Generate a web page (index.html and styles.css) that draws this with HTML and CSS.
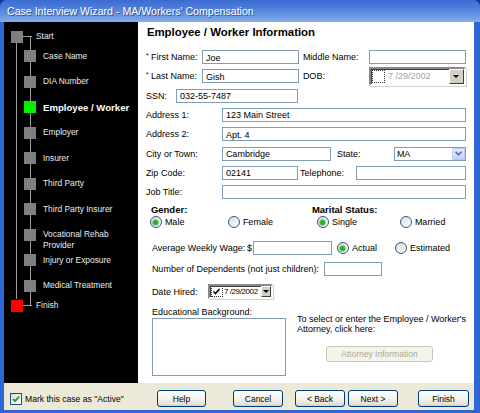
FILE: index.html
```html
<!DOCTYPE html>
<html lang="en">
<head>
  <meta charset="UTF-8" />
  <title>Case Interview Wizard</title>
  <link rel="stylesheet" href="styles.css">
</head>
<body>

<div class="window">
  <div class="titlebar">Case Interview Wizard - MA/Workers' Compensation</div>

  <div class="frame">
    <div class="body-row">

      <!-- Steps tree -->
      <div class="steps">
        <div class="node root first"><span class="sq"></span><span class="txt">Start</span></div>
        <div class="node sub"><span class="sq"></span><span class="txt">Case Name</span></div>
        <div class="node sub"><span class="sq"></span><span class="txt">DIA Number</span></div>
        <div class="node sub current"><span class="sq"></span><span class="txt">Employee / Worker</span></div>
        <div class="node sub"><span class="sq"></span><span class="txt">Employer</span></div>
        <div class="node sub"><span class="sq"></span><span class="txt">Insurer</span></div>
        <div class="node sub"><span class="sq"></span><span class="txt">Third Party</span></div>
        <div class="node sub"><span class="sq"></span><span class="txt">Third Party Insurer</span></div>
        <div class="node sub"><span class="sq"></span><span class="txt">Vocational Rehab<br>Provider</span></div>
        <div class="node sub"><span class="sq"></span><span class="txt">Injury or Exposure</span></div>
        <div class="node sub last"><span class="sq"></span><span class="txt">Medical Treatment</span></div>
        <div class="node root finish"><span class="sq"></span><span class="txt">Finish</span></div>
      </div>

      <!-- Page -->
      <div class="page">
        <h1>Employee / Worker Information</h1>

        <div class="row">
          <span class="lbl w56"><small class="req">*</small> First Name:</span>
          <input class="w97" type="text" value="Joe">
          <span class="lbl ml4 w66">Middle Name:</span>
          <input class="w97" type="text" value="">
        </div>
        <div class="row">
          <span class="lbl w56"><small class="req">*</small> Last Name:</span>
          <input class="w97" type="text" value="Gish">
          <span class="lbl ml4 w66">DOB:</span>
          <div class="picker dob">
            <span class="pchk"></span>
            <span class="pval">7 /29/2002</span>
            <span class="pbtn"></span>
          </div>
        </div>
        <div class="row">
          <span class="lbl w30">SSN:</span>
          <input class="w122" type="text" value="032-55-7487">
        </div>
        <div class="row">
          <span class="lbl w76">Address 1:</span>
          <input class="w244" type="text" value="123 Main Street">
        </div>
        <div class="row">
          <span class="lbl w76">Address 2:</span>
          <input class="w244" type="text" value="Apt. 4">
        </div>
        <div class="row">
          <span class="lbl w76">City or Town:</span>
          <input class="w109" type="text" value="Cambridge">
          <span class="lbl ml6 w57">State:</span>
          <div class="combo">
            <span class="cval">MA</span>
            <span class="cbtn">
              <svg width="7" height="5" viewBox="0 0 7 5"><path d="M0.5 0.8 L3.5 3.8 L6.5 0.8" fill="none" stroke="#4d6185" stroke-width="1.4"/></svg>
            </span>
          </div>
        </div>
        <div class="row">
          <span class="lbl w76">Zip Code:</span>
          <input class="w76" type="text" value="02141">
          <span class="lbl ml2 w56">Telephone:</span>
          <input class="w110" type="text" value="">
        </div>
        <div class="row">
          <span class="lbl w76">Job Title:</span>
          <input class="w244" type="text" value="">
        </div>

        <div class="sect-head">
          <span class="gender">Gender:</span>
          <span>Marital Status:</span>
        </div>
        <div class="radios">
          <span class="opt o-male"><span class="radio on"></span>Male</span>
          <span class="opt o-female"><span class="radio"></span>Female</span>
          <span class="opt o-single"><span class="radio on"></span>Single</span>
          <span class="opt"><span class="radio"></span>Married</span>
        </div>

        <div class="line wage">
          <span class="lbl w95">Average Weekly Wage:</span>
          <span class="lbl w6">$</span>
          <input class="w79" type="text" value="">
          <span class="opt o-actual"><span class="radio on"></span>Actual</span>
          <span class="opt"><span class="radio"></span>Estimated</span>
        </div>
        <div class="line deps">
          <span class="lbl w172">Number of Dependents (not just children):</span>
          <input class="w58" type="text" value="">
        </div>
        <div class="line hired">
          <span class="lbl w56">Date Hired:</span>
          <div class="picker small">
            <span class="pchk checked">
              <svg width="9" height="9" viewBox="0 0 9 9"><path d="M1.5 4.5 L3.5 6.5 L7.5 2" fill="none" stroke="#000" stroke-width="1.6"/></svg>
            </span>
            <span class="pval">7 /29/2002</span>
            <span class="pbtn"></span>
          </div>
        </div>

        <div class="bottom">
          <div class="edu">
            <div class="lbl">Educational Background:</div>
            <textarea></textarea>
          </div>
          <div class="attorney">
            <p>To select or enter the Employee / Worker's<br>Attorney, click here:</p>
            <button class="btn-disabled" disabled>Attorney Information</button>
          </div>
        </div>
      </div>
    </div>

    <!-- Footer -->
    <div class="footer">
      <label class="active-chk">
        <span class="chk">
          <svg width="10" height="10" viewBox="0 0 10 10"><path d="M2 5 L4 7.2 L8.2 2.6" fill="none" stroke="#21a121" stroke-width="1.8"/></svg>
        </span>
        Mark this case as "Active"
      </label>
      <button class="btn b-help">Help</button>
      <button class="btn b-cancel">Cancel</button>
      <button class="btn b-back">&lt; Back</button>
      <button class="btn b-next">Next &gt;</button>
      <button class="btn b-finish">Finish</button>
    </div>
  </div>
</div>

</body>
</html>
```

FILE: styles.css
```css
* {
  box-sizing: border-box;
  margin: 0;
  padding: 0;
}

body {
  font-family: 'Liberation Sans', Arial, sans-serif;
  background: #163a8e;
  width: 480px;
  height: 413px;
  overflow: hidden;
}

/* Window chrome */
.window {
  width: 480px;
  height: 413px;
  background: #2f66d6;
  border-radius: 7px 7px 0 0;
  display: flex;
  flex-direction: column;
  overflow: hidden;
}

.titlebar {
  height: 22px;
  line-height: 23px;
  padding-left: 7px;
  color: #fff;
  font-size: 10.6px;
  text-shadow: 1px 1px 0 #2c52a8;
  background: linear-gradient(to bottom, #3c6cd2 0%, #4a7ad8 30%, #6391e0 65%, #86aeea 100%);
}

.frame {
  flex: 1;
  display: flex;
  flex-direction: column;
  padding: 0 6px 3px 4px;
}

.body-row {
  display: flex;
  height: 361px;
}

/* Steps tree */
.steps {
  width: 134px;
  background: #000;
  color: #ececec;
  font-size: 8.4px;
  padding-top: 8.5px;
  position: relative;
}

.steps::before {
  content: "";
  position: absolute;
  left: 12px;
  top: 20px;
  width: 1px;
  height: 257px;
  background: #9c9c9c;
}

.steps::after {
  content: "";
  position: absolute;
  left: 26px;
  top: 14px;
  width: 1px;
  height: 270px;
  background: #9c9c9c;
}

.node {
  display: flex;
  align-items: flex-start;
  height: 25.5px;
}

.node .sq {
  width: 12px;
  height: 12px;
  flex: none;
  background: #7f7f7f;
  position: relative;
  z-index: 1;
}

.node .txt {
  line-height: 11px;
  margin-top: 0.5px;
}

.node.root {
  margin-left: 7px;
}

.node.root .sq {
  margin-right: 13px;
}

.node.root .sq::after {
  content: "";
  position: absolute;
  left: 12px;
  top: 5px;
  width: 9px;
  height: 1px;
  background: #9c9c9c;
}

.node.first {
  height: 19.5px;
}

.node.finish .sq {
  background: #f00;
}

.node.sub {
  margin-left: 20px;
}

.node.sub .sq {
  margin-right: 7px;
}

.node.sub.last {
  height: 20px;
}

.node.current .sq {
  background: #00f000;
}

.node.current .txt {
  font-weight: bold;
  font-size: 9.6px;
  color: #fff;
}

/* Page */
.page {
  flex: 1;
  background: #fff;
  padding: 4px 8px 0 8px;
  font-size: 9px;
  color: #000;
}

.page h1 {
  font-size: 11.4px;
  line-height: 12px;
  margin: 0 0 9.4px 1px;
}

.row {
  display: flex;
  align-items: center;
  height: 19.3px;
}

.lbl {
  flex: none;
  white-space: nowrap;
}

.req {
  font-size: 6.5px;
  vertical-align: 2px;
}

.w6 { width: 6px; }
.w30 { width: 30px; }
.w56 { width: 56px; }
.w57 { width: 57px; }
.w58 { width: 58px; }
.w66 { width: 66px; }
.w76 { width: 76px; }
.w79 { width: 79px; }
.w95 { width: 95px; }
.w97 { width: 97px; }
.w109 { width: 109px; }
.w110 { width: 110px; }
.w122 { width: 122px; }
.w172 { width: 172px; }
.w244 { width: 244px; }
.ml2 { margin-left: 2px; }
.ml4 { margin-left: 4px; }
.ml6 { margin-left: 6px; }

.page input {
  flex: none;
  height: 14px;
  border: 1px solid #7f9db9;
  background: #fff;
  font-family: 'Liberation Sans', Arial, sans-serif;
  font-size: 9px;
  padding: 1px 3px 0;
  color: #000;
  outline: none;
}

/* Date picker */
.picker {
  flex: none;
  display: flex;
  align-items: center;
  background: #fff;
  border: 2px solid;
  border-color: #8a8a8a #fff #fff #8a8a8a;
  box-shadow: inset 1px 1px 0 #404040, 1px 1px 0 #d4d0c8;
}

.picker.dob {
  width: 97px;
  height: 19px;
}

.picker.small {
  width: 65px;
  height: 15px;
}

.pchk {
  flex: none;
  width: 13px;
  height: 13px;
  margin-left: 1px;
  border: 1px dotted #333;
  display: flex;
  align-items: center;
  justify-content: center;
}

.picker.small .pchk {
  width: 12px;
  height: 11px;
  margin-left: 1px;
}

.pval {
  flex: 1;
  margin-left: 3px;
  color: #a3a3a3;
  white-space: nowrap;
}

.picker.small .pval {
  color: #000;
  margin-left: 1px;
  font-size: 8px;
  letter-spacing: -0.4px;
}

.pbtn {
  flex: none;
  width: 15px;
  height: 100%;
  background: #d4d0c8;
  border: 1px solid;
  border-color: #fff #404040 #404040 #fff;
  display: flex;
  align-items: center;
  justify-content: center;
}

.picker.small .pbtn {
  width: 10px;
}

.pbtn::after {
  content: "";
  border-left: 3px solid transparent;
  border-right: 3px solid transparent;
  border-top: 3px solid #000;
}

/* Combo box */
.combo {
  flex: none;
  width: 72px;
  height: 14px;
  border: 1px solid #7f9db9;
  display: flex;
  align-items: center;
  padding-left: 2px;
}

.cval {
  flex: 1;
}

.cbtn {
  width: 13px;
  height: 12px;
  border: 1px solid #b9cbf3;
  border-radius: 1px;
  background: linear-gradient(to bottom, #e4ecfd, #c0d2fa);
  display: flex;
  align-items: center;
  justify-content: center;
}

/* Radio groups */
.sect-head {
  display: flex;
  align-items: center;
  height: 14px;
  margin-top: 0.5px;
  padding-left: 5px;
  font-weight: bold;
  font-size: 9.5px;
}

.sect-head .gender {
  width: 161px;
}

.radios {
  display: flex;
  align-items: center;
  height: 12px;
  padding-left: 4px;
}

.opt {
  flex: none;
  display: flex;
  align-items: center;
  white-space: nowrap;
}

.o-male { width: 78px; }
.o-female { width: 89px; }
.o-single { width: 83px; }
.o-actual { width: 58px; margin-left: 5px; }

.radio {
  width: 12px;
  height: 12px;
  margin-right: 3px;
  border: 1px solid #2a5a8c;
  border-radius: 50%;
  background: linear-gradient(135deg, #dcdad3, #fff);
  display: flex;
  align-items: center;
  justify-content: center;
}

.radio.on::after {
  content: "";
  width: 5px;
  height: 5px;
  border-radius: 50%;
  background: #27b227;
  box-shadow: 0 0 0 1px #8fd88f;
}

.line {
  display: flex;
  align-items: center;
  padding-left: 6px;
}

.wage {
  height: 14px;
  margin-top: 13px;
}

.deps {
  height: 14px;
  margin-top: 7px;
}

.hired {
  height: 15px;
  margin-top: 8px;
}

/* Education + attorney */
.bottom {
  display: flex;
  padding-left: 6px;
  margin-top: 8px;
}

.edu .lbl {
  line-height: 10px;
}

.edu textarea {
  display: block;
  width: 134px;
  height: 58px;
  margin-top: 1px;
  border: 1px solid #7f9db9;
  resize: none;
  outline: none;
}

.attorney {
  margin-left: 11px;
  padding-top: 7px;
}

.attorney p {
  line-height: 10px;
  white-space: nowrap;
}

.btn-disabled {
  display: block;
  width: 107px;
  height: 16px;
  margin: 12px 0 0 29px;
  border: 1px solid #c9c7ba;
  border-radius: 3px;
  background: #f5f4ea;
  color: #aca899;
  font-family: 'Liberation Sans', Arial, sans-serif;
  font-size: 8.5px;
}

/* Footer */
.footer {
  flex: 1;
  background: #ece9d8;
  display: flex;
  align-items: flex-start;
  padding: 7px 0 0 6px;
  font-size: 8.6px;
}

.active-chk {
  width: 132px;
  height: 17px;
  display: flex;
  align-items: center;
  white-space: nowrap;
}

.chk {
  width: 12px;
  height: 12px;
  margin-right: 3px;
  border: 1px solid #1c5180;
  background: linear-gradient(135deg, #dcdad3, #fff);
  display: flex;
  align-items: center;
  justify-content: center;
}

.btn {
  flex: none;
  width: 50px;
  height: 17px;
  border: 1px solid #003c74;
  border-radius: 3px;
  background: linear-gradient(to bottom, #fff 0%, #f4f3ee 50%, #e6e3d8 85%, #d6d0c5 100%);
  font-family: 'Liberation Sans', Arial, sans-serif;
  font-size: 8.5px;
  color: #000;
}

.b-help { width: 49px; margin-left: 15px; }
.b-cancel { margin-left: 27px; }
.b-back { margin-left: 12px; }
.b-next { margin-left: 3px; }
.b-finish { width: 51px; margin-left: 20px; }
```
